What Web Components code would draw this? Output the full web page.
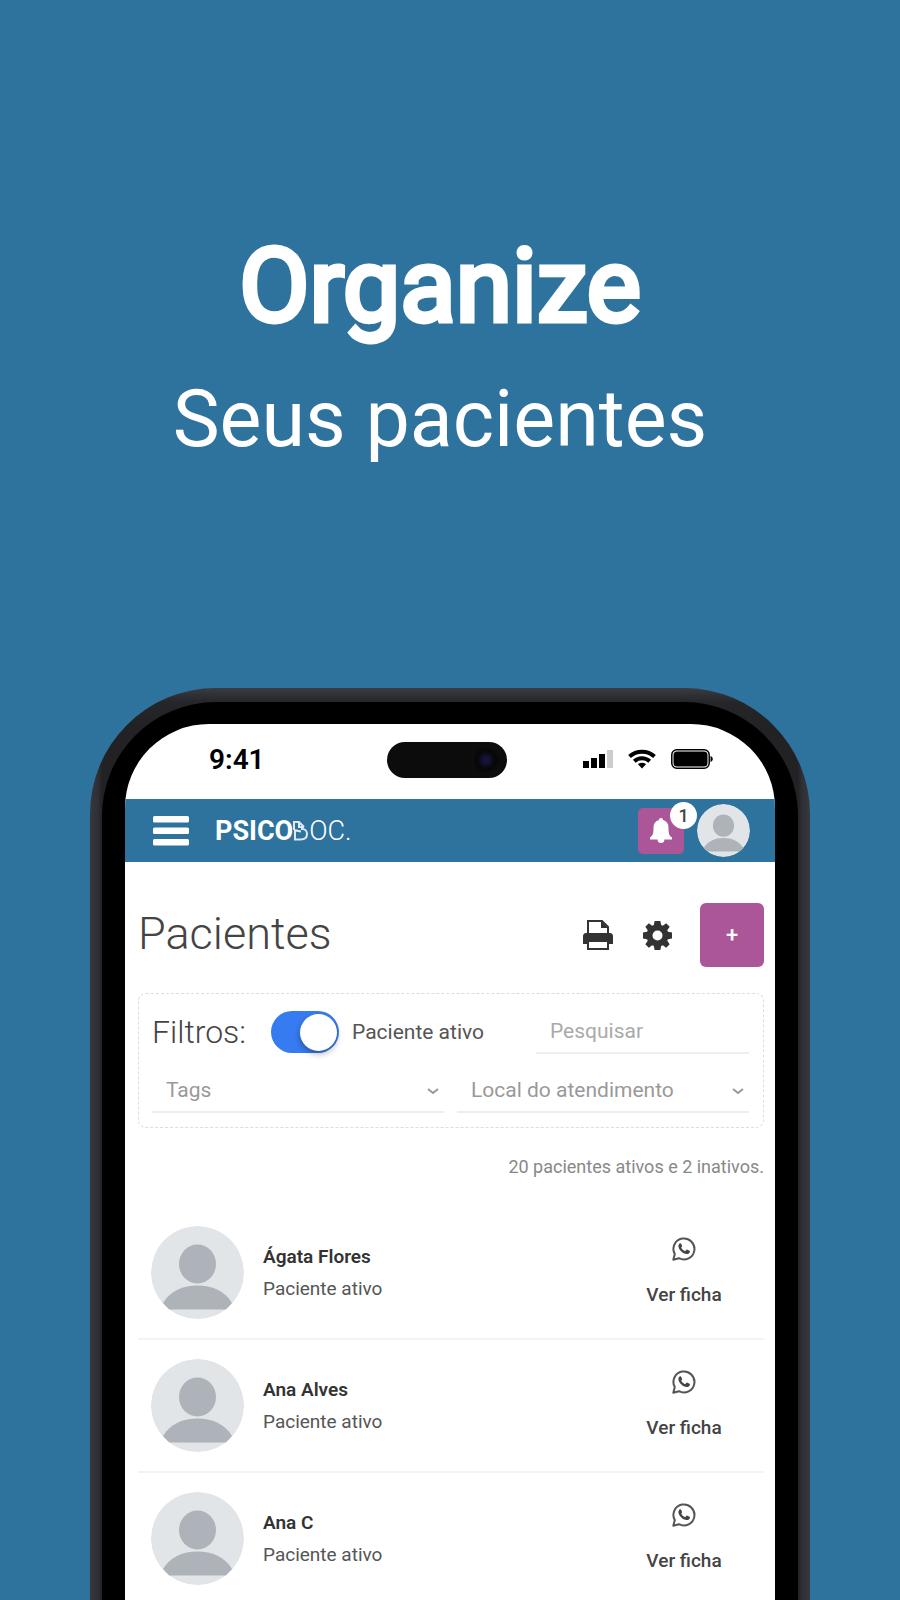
<!DOCTYPE html>
<html lang="pt-BR">
<head>
<meta charset="utf-8">
<meta name="viewport" content="width=device-width, initial-scale=1">
<title>PsicoDoc – Organize seus pacientes</title>
<style>
  body { margin: 0; background: #2e739d; font-family: Roboto, "Liberation Sans", sans-serif; color: #444; }
</style>
</head>
<body>
<promo-page>
  <promo-headline slot="headline"><span slot="title">Organize</span><span slot="subtitle">Seus pacientes</span></promo-headline>
  <phone-frame>
    <status-bar slot="status" time="9:41"></status-bar>
    <app-header count="1"></app-header>
    <patients-view>
      <filter-panel slot="filters"></filter-panel>
      <span slot="summary">20 pacientes ativos e 2 inativos.</span>
      <patient-row><span slot="name">Ágata Flores</span><span slot="state">Paciente ativo</span></patient-row>
      <patient-row><span slot="name">Ana Alves</span><span slot="state">Paciente ativo</span></patient-row>
      <patient-row><span slot="name">Ana C</span><span slot="state">Paciente ativo</span></patient-row>
    </patients-view>
  </phone-frame>
</promo-page>

<script>
const define = (name, html, setup) => {
  const template = document.createElement('template');
  template.innerHTML = html;
  customElements.define(name, class extends HTMLElement {
    constructor() {
      super();
      this.attachShadow({ mode: 'open' }).append(template.content.cloneNode(true));
    }
    connectedCallback() { if (setup) setup(this, this.shadowRoot); }
  });
};

define('promo-page', `
  <style>
    :host { display: flex; flex-direction: column; height: 100vh; overflow: hidden; }
    header { flex: none; height: 43%; box-sizing: border-box; padding-top: 219px; padding-right: 20px; }
    main { flex: none; display: flex; justify-content: center; }
  </style>
  <header><slot name="headline"></slot></header>
  <main><slot></slot></main>`);

define('promo-headline', `
  <style>
    :host { display: block; text-align: center; color: #fff; }
    h1, p { margin: 0; font-weight: 400; white-space: nowrap; }
    h1 { font-size: 102px; line-height: 134px; -webkit-text-stroke: 5px #fff; }
    p { font-size: 79px; line-height: 132px; }
  </style>
  <h1><slot name="title"></slot></h1>
  <p><slot name="subtitle"></slot></p>`);

define('phone-frame', `
  <style>
    :host { display: block; width: 80%; box-sizing: border-box; padding: 14px 12px 0; border-radius: 126px 126px 0 0;
      background: linear-gradient(#3a3c42, #26262a 14px, transparent 40px), linear-gradient(90deg, #36383e, #2f3036 8px, #222224 12px, #222224 calc(100% - 12px), #2f3036 calc(100% - 8px), #36383e); }
    .bezel { padding: 22px 23px 0; background: #000; border-radius: 114px 114px 0 0; }
    .screen { background: #fff; border-radius: 84px 84px 0 0; overflow: hidden; }
  </style>
  <div class="bezel"><div class="screen"><slot name="status"></slot><slot></slot></div></div>`);

define('status-bar', `
  <style>
    :host { display: grid; grid-template-columns: 1fr 120px 1fr; align-items: center; height: 75px; box-sizing: border-box; padding: 0 6px 3px 0; color: #000; }
    time { padding-left: 84px; font-size: 28px; line-height: 32px; font-weight: 600; }
    .island { box-sizing: border-box; height: 36px; border-radius: 18px; background: #0c0c0c; display: flex; align-items: center; justify-content: flex-end; padding-right: 8px; }
    .signals { display: flex; align-items: center; gap: 15px; padding: 0 56px 2px 0; justify-content: flex-end; }
    svg { display: block; }
  </style>
  <time></time>
  <div class="island"><svg width="26" height="26" viewBox="0 0 26 26"><circle cx="13" cy="13" r="12" fill="#08080a"/><circle cx="13" cy="13" r="7" fill="#0e0e24"/><circle cx="13" cy="13" r="4" fill="#14133a"/></svg></div>
  <div class="signals">
    <svg width="30" height="20" viewBox="0 0 30 20"><path d="M0 12h6v7H0zM8 9h6v10H8zM16 5h6v14h-6z"/><path d="M24 1h6v18h-6z" fill="#ccc"/></svg>
    <svg width="28" height="20" viewBox="0 0 28 20" fill="none" stroke="#000" stroke-width="4"><path d="M1.500 7.500C8.500 1 19.500 1 26.500 7.500"/><path d="M6.300 12.200C10.700 8.200 17.300 8.200 21.700 12.200"/><path d="M14 19.500l-4-4.200c2.200-2 5.800-2 8 0z" fill="#000" stroke="none"/></svg>
    <svg width="42" height="20" viewBox="0 0 42 20"><rect x=".8" y=".8" width="37.400" height="18.400" rx="5" fill="none" stroke="#000" stroke-width="1.500"/><rect x="2.500" y="2.500" width="34" height="15" rx="3.500"/><path d="M39.500 7c3 1 3 5 0 6z"/></svg>
  </div>`, (el, root) => { root.querySelector('time').textContent = el.getAttribute('time'); });

define('user-avatar', `
  <style>
    :host { display: block; flex: none; width: 93px; height: 93px; }
    svg { display: block; width: 100%; height: 100%; border-radius: 50%; }
  </style>
  <svg viewBox="0 0 93 93" role="img" aria-label="Foto">
    <circle cx="46.500" cy="46.500" r="46.500" fill="#e2e5e7"/>
    <ellipse cx="46.500" cy="38" rx="18.500" ry="19.500" fill="#adb3b8"/>
    <path d="M12 77C19 65 32 59.500 46.500 59.500S74 65 81 77L75 83.500H18z" fill="#adb3b8"/>
  </svg>`);

define('app-header', `
  <style>
    :host { display: flex; align-items: center; height: 63px; box-sizing: border-box; padding: 0 25px 0 28px; background: #2e739d; color: #fff; }
    button { border: 0; padding: 0; cursor: pointer; font: inherit; color: inherit; background: none; }
    svg { display: block; }
    .brand { display: flex; align-items: center; margin-left: 26px; color: inherit; text-decoration: none; font-size: 27px; line-height: 32px; font-weight: 700; }
    .brand span:last-child { font-weight: 300; }
    .bell { position: relative; margin-left: auto; width: 46px; height: 46px; border-radius: 5px; background: #ab5699; display: grid; place-items: center; }
    .badge { position: absolute; right: -13px; top: -6px; width: 27px; height: 27px; border-radius: 50%; background: #fff; color: #444; font-size: 18px; line-height: 27px; font-weight: 500; text-align: center; }
    user-avatar { width: 53px; height: 53px; margin-left: 13px; }
  </style>
  <button aria-label="Menu"><svg width="36" height="30" viewBox="0 0 36 30" fill="#fff"><rect width="36" height="6.500" rx="1.500"/><rect y="11.500" width="36" height="6.500" rx="1.500"/><rect y="23" width="36" height="6.500" rx="1.500"/></svg></button>
  <a class="brand" href="#" aria-label="PSICODOC."><span>PSICO</span><svg width="16" height="20" viewBox="0 0 16 20" fill="none" stroke="#dcebf3" stroke-width="2"><path d="M1 9V1h5l5 5M6 1v5h5M1 9c3 0 4 1.500 7 1.500M2 10v8.500h5.500c4 0 6.500-2 6.500-5.500 0-3-2-5-4.500-5H8"/></svg><span>OC.</span></a>
  <button class="bell" aria-label="Notificações">
    <svg width="24" height="26" viewBox="0 0 24 26" fill="#fff"><path d="M12 0c1.400 0 2 .8 2 2 3.600 1 5.500 3.700 5.500 7.500 0 6 .5 8 3.500 10v2H1v-2c3-2 3.500-4 3.500-10C4.500 5.700 6.400 3 10 2c0-1.200.6-2 2-2zM8.500 21h7c0 3-1.500 4-3.500 4s-3.500-1-3.500-4z"/></svg>
    <span class="badge"></span>
  </button>
  <user-avatar></user-avatar>`, (el, root) => { root.querySelector('.badge').textContent = el.getAttribute('count'); });

define('patients-view', `
  <style>
    :host { display: block; padding: 41px 11px 0 13px; }
    .top { display: flex; align-items: center; height: 64px; margin-bottom: 26px; }
    h2 { margin: 0; font-size: 45px; line-height: 54px; font-weight: 300; color: #444; flex: 1; padding-bottom: 2px; }
    button { border: 0; padding: 0; background: none; cursor: pointer; }
    svg { display: block; }
    .print { margin-right: 29px; }
    .add { margin-left: 28px; width: 64px; height: 64px; border-radius: 6px; background: #ab5699; color: #fff; font: 500 22px/24px Roboto, sans-serif; }
    .summary { margin: 25px 0 26px; text-align: right; font-size: 18px; line-height: 28px; color: #888; }
  </style>
  <div class="top">
    <h2>Pacientes</h2>
    <button class="print" aria-label="Imprimir"><svg width="32" height="30" viewBox="0 0 32 30"><path d="M6 14V1h14l6 6v7" fill="#fff" stroke="#333" stroke-width="2"/><path d="M19 1v7h7z" fill="#333"/><path d="M4 13h24c2 0 3 1.500 3 3v8h-4v-3H5v3H1v-8c0-1.500 1-3 3-3z" fill="#333"/><path d="M6 21h20v8H6z" fill="#fff" stroke="#333" stroke-width="2"/></svg></button>
    <button aria-label="Configurações"><svg width="29" height="29" viewBox="0 0 30 30" fill="#333"><path fill-rule="evenodd" d="M12 0h6l.8 4.200 1.700.7L24 2.400 27.600 6l-2.500 3.500.7 1.700 4.200.8v6l-4.200.8-.7 1.700 2.500 3.500-3.600 3.600-3.500-2.500-1.700.7L18 30h-6l-.8-4.200-1.700-.7L6 27.600 2.400 24l2.500-3.500-.7-1.700L0 18v-6l4.200-.8.7-1.700L2.400 6 6 2.400l3.500 2.500 1.700-.7zM15 9.800a5.200 5.200 0 1 0 0 10.400 5.200 5.200 0 0 0 0-10.400z"/></svg></button>
    <button class="add" aria-label="Adicionar paciente">+</button>
  </div>
  <slot name="filters"></slot>
  <p class="summary"><slot name="summary"></slot></p>
  <slot></slot>`);

define('filter-panel', `
  <style>
    :host { display: block; box-sizing: border-box; border: 1px dashed #ddd; border-radius: 8px; padding: 16px 14px 14px 13px; }
    .line { display: flex; align-items: center; }
    h3 { margin: 0; width: 119px; flex: none; font-size: 32px; line-height: 44px; font-weight: 300; color: #444; }
    label { display: flex; align-items: center; gap: 13px; font-size: 21px; line-height: 28px; color: #555; white-space: nowrap; }
    input[type=checkbox] { appearance: none; margin: 0; width: 68px; height: 42px; box-sizing: border-box; border-radius: 21px; background: #367bf0; padding: 2px; display: flex; align-items: center; justify-content: flex-end; }
    input[type=checkbox]:not(:checked) { justify-content: flex-start; background: #ccc; }
    input[type=checkbox]::before { content: ""; width: 37px; height: 37px; border-radius: 50%; background: #fff; box-shadow: 0 3px 6px rgba(0,0,0,.3); }
    input[type=search], select { appearance: none; box-sizing: border-box; border: 0; border-bottom: 2px solid #eee; border-radius: 0; margin: 0; padding: 0 14px; height: 44px; font: 400 21px/28px Roboto, sans-serif; background: transparent; outline: 0; }
    input[type=search] { width: 213px; margin-left: auto; color: #555; }
    ::placeholder { color: #aaa; opacity: 1; }
    .selects { display: grid; grid-template-columns: 1fr 1fr; gap: 13px; margin-top: 15px; }
    .pick { display: grid; align-items: center; }
    .pick > * { grid-area: 1 / 1; }
    select { width: 100%; color: #999; }
    svg { justify-self: end; margin-right: 5px; pointer-events: none; }
  </style>
  <div class="line">
    <h3>Filtros:</h3>
    <label><input type="checkbox" checked>Paciente ativo</label>
    <input type="search" placeholder="Pesquisar" aria-label="Pesquisar">
  </div>
  <div class="selects">
    <div class="pick"><select aria-label="Tags"><option>Tags</option></select><svg width="12" height="8" viewBox="0 0 12 8" fill="none" stroke="#999" stroke-width="2"><path d="M1 2l5 4 5-4"/></svg></div>
    <div class="pick"><select aria-label="Local do atendimento"><option>Local do atendimento</option></select><svg width="12" height="8" viewBox="0 0 12 8" fill="none" stroke="#999" stroke-width="2"><path d="M1 2l5 4 5-4"/></svg></div>
  </div>`);

define('patient-row', `
  <style>
    :host { display: flex; align-items: center; height: 133px; box-sizing: border-box; border-bottom: 2px solid #f3f3f3; padding: 0 0 0 13px; }
    .who { margin-left: 19px; flex: 1; font-size: 19px; line-height: 32px; color: #555; }
    .who b { display: block; font-weight: 600; color: #333; }
    .actions { flex: none; width: 160px; display: flex; flex-direction: column; align-items: center; gap: 20px; }
    a { color: #444; text-decoration: none; font-size: 19px; line-height: 28px; font-weight: 500; }
    svg { display: block; }
  </style>
  <user-avatar></user-avatar>
  <div class="who"><b><slot name="name"></slot></b><slot name="state"></slot></div>
  <div class="actions">
    <a href="#" aria-label="WhatsApp"><svg width="24" height="24" viewBox="0 0 24 24"><path d="M1.300 22.700l1.500-5.600A10.500 10.500 0 1 1 7 21.200z" fill="none" stroke="#555" stroke-width="2" stroke-linejoin="round"/><path d="M8.300 6.200c.6 0 .8.200 1 .7l.8 2c.1.400 0 .7-.9 1.700.8 1.700 2.100 2.900 4 3.700l1.300-1.500c.3-.3.600-.3.900-.1l2.200 1.100c.4.200.4.500.3 1-.4 1.600-1.700 2.400-3.200 2.300-3.900-.4-8-4.400-8.300-7.900 0-1.500.8-3 1.900-3z" fill="#444"/></svg></a>
    <a href="#">Ver ficha</a>
  </div>`);
</script>
</body>
</html>
